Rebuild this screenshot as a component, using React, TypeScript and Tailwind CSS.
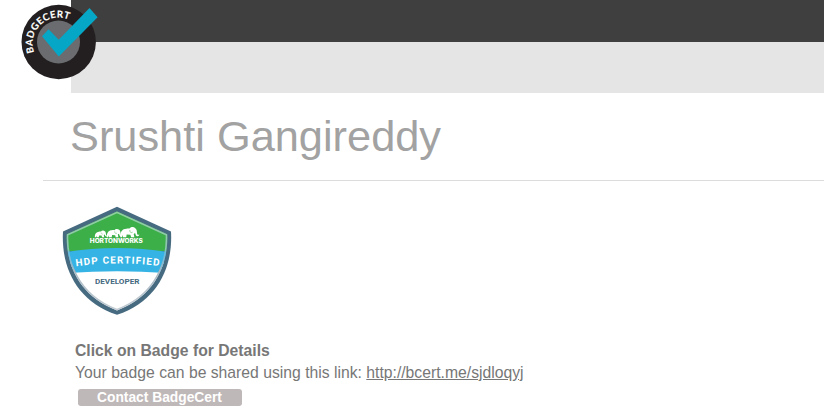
function BadgeCertLogo() {
  return (
    <svg viewBox="0 0 84 84" className="absolute left-[18px] top-0 h-[84px] w-[84px]">
      <defs>
        <path id="logo-arc" d="M16.2 52.4 A26 26 0 1 1 66.6 42" />
      </defs>
      <circle cx="40.7" cy="42" r="37.2" fill="#231f20" />
      <circle cx="40.5" cy="42" r="21.5" fill="#6a6c6f" />
      <path d="M24 36.2 L30.6 29.3 L40.7 39.8 L71.5 8 L79.6 17.2 L40.8 56.6 Z" fill="#06a7c6" />
      <text fill="#fff" stroke="#fff" strokeWidth=".15" fontFamily="Lato, sans-serif" fontWeight="700" fontSize="9.6">
        <textPath href="#logo-arc" textLength="60" lengthAdjust="spacing">BADGECERT</textPath>
      </text>
    </svg>
  );
}

function Elephant({ x, y, scale }: { x: number; y: number; scale: number }) {
  return (
    <g transform={`translate(${x} ${y}) scale(${scale})`} fill="#fff">
      <path d="M0 9 C0 5 2 1.8 6 1.8 C7 1.4 8 1.4 9 1.6 C10 -.2 13 -.4 14.5 1.2 C16 2.2 16 4 16.2 6 C16.4 7.6 17.2 8 18.4 7.3 C18.2 9.4 15.2 9.5 14.8 7.2 L14.3 5.8 L13 6.8 L13.6 10 L10.5 10 L9.8 7.5 L6.2 7.3 L5.8 10 L2.6 10 L2.3 7.5 L1.6 10 L.2 10 Z" />
      <path d="M9.2 3 C9.2 5.2 10.5 6.2 12 5" fill="none" stroke="#3daf49" strokeWidth=".5" />
    </g>
  );
}

function ShieldBadge() {
  return (
    <svg viewBox="62 206 110 110" className="h-[110px] w-[110px]">
      <defs>
        <clipPath id="shield-inner">
          <path d="M117 211.6 L167.2 234.2 C168.4 260 158 295 117 310.4 C76 295 65.6 260 66.8 234.2 Z" />
        </clipPath>
        <path id="band-arc" d="M76 266.2 Q117 260.6 161 266.2" />
        <linearGradient id="rim" x1="0" y1="0" x2="0" y2="1">
          <stop offset="0" stopColor="#8fce9e" />
          <stop offset=".38" stopColor="#8fc5b4" />
          <stop offset=".42" stopColor="#6bbbdc" />
          <stop offset=".6" stopColor="#a9b9c4" />
          <stop offset="1" stopColor="#c3ccd3" />
        </linearGradient>
      </defs>
      <path d="M117 206.8 L171 231.4 C173 266 158.5 301 117 314.8 C75.5 301 61 266 63 231.4 Z" fill="#466a80" />
      <g clipPath="url(#shield-inner)">
        <rect x="62" y="206" width="110" height="45" fill="#3daf49" />
        <rect x="62" y="262" width="110" height="54" fill="#fff" />
        <path d="M62 252.6 Q117 243.2 172 252.6 V273.6 Q117 268.8 62 273.6 Z" fill="#34b3e4" />
        <path d="M117 211.6 L167.2 234.2 C168.4 260 158 295 117 310.4 C76 295 65.6 260 66.8 234.2 Z" fill="none" stroke="url(#rim)" strokeWidth="3.2" />
      </g>
      <Elephant x={94.8} y={230.4} scale={0.69} />
      <Elephant x={106.8} y={228.8} scale={0.85} />
      <Elephant x={120.2} y={226.9} scale={1.04} />
      <text x="89.8" y="242.8" textLength="53" lengthAdjust="spacingAndGlyphs" fill="#fff" fontFamily="Inter, sans-serif" fontWeight="800" fontSize="5.9">HORTONWORKS</text>
      <text fill="#fff" fontFamily="Roboto, sans-serif" fontWeight="700" fontSize="9.9">
        <textPath href="#band-arc" textLength="83.4" lengthAdjust="spacing">HDP CERTIFIED</textPath>
      </text>
      <text x="95" y="284.4" textLength="44.4" lengthAdjust="spacingAndGlyphs" fill="#466a80" fontFamily="Roboto, sans-serif" fontWeight="700" fontSize="7.9">DEVELOPER</text>
    </svg>
  );
}

export default function App() {
  return (
    <div className="relative h-[418px] w-full overflow-hidden bg-white font-['Liberation_Sans',Arial,sans-serif]">
      <header className="pl-[71px]">
        <div className="h-[42px] bg-[#3f3f3f]" />
        <div className="h-[51px] bg-[#e5e5e5]" />
      </header>
      <BadgeCertLogo />
      <h1 className="ml-[43px] h-[88px] border-b border-[#dcdcdc] pl-[27px] pt-[17px] text-[43.35px] leading-[52px] text-[#a2a2a2]">
        Srushti Gangireddy
      </h1>
      <main className="pl-[62px] pt-[25px]">
        <ShieldBadge />
        <div className="pl-[13px] pt-[24px] text-[15.73px] leading-[21.5px] text-[#777]">
          <p className="font-bold">Click on Badge for Details</p>
          <p>
            Your badge can be shared using this link:{" "}
            <a className="underline">http://bcert.me/sjdloqyj</a>
          </p>
        </div>
        <button className="ml-4 mt-[6px] block h-[17px] w-[164px] rounded-[3px] bg-[#bfb8b8] pr-px text-[13.8px] font-bold leading-[17px] text-white">
          Contact BadgeCert
        </button>
      </main>
    </div>
  );
}
